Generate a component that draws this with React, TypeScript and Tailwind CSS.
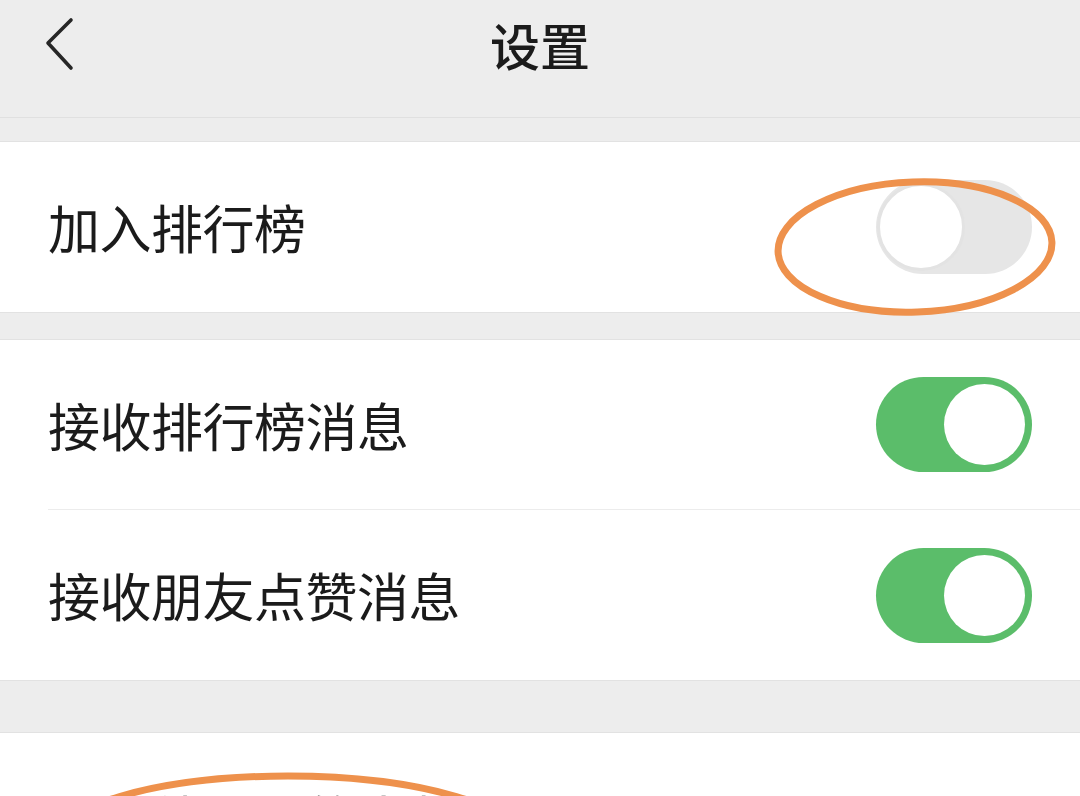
import React from 'react'

const font = { fontFamily: '"Noto Sans CJK SC", "Noto Sans", sans-serif' }

function Toggle({ on }: { on: boolean }) {
  if (on) {
    return (
      <div className="w-[156px] h-[95px] rounded-full bg-[#5bbd6a] flex items-center justify-end pr-[7px]">
        <div className="w-[81px] h-[81px] rounded-full bg-white" />
      </div>
    )
  }
  return (
    <div className="w-[156px] h-[94px] rounded-full bg-[#e6e6e6] flex items-center">
      <div className="w-[88px] h-[88px] ml-[1px] rounded-full bg-white border-[3px] border-[#e3e3e3]" />
    </div>
  )
}

function Row({ label, on, divider }: { label: string; on?: boolean; divider?: boolean }) {
  return (
    <div className="pl-[48px] bg-white">
      <div className={`h-[170px] flex items-center justify-between pr-[48px] ${divider ? 'border-b border-[#ececec]' : ''}`}>
        <span className="text-[52px] leading-none text-[#1b1b1b] tracking-[-0.5px]">{label}</span>
        {on !== undefined && <Toggle on={on} />}
      </div>
    </div>
  )
}

export default function App() {
  return (
    <div className="relative w-[1080px] h-[796px] overflow-hidden bg-[#ededed]" style={font}>
      <header className="h-[118px] flex items-center justify-center relative border-b border-[#e0e0e0]">
        <svg className="absolute left-[40px] top-[14px]" width="40" height="62" viewBox="0 0 40 62">
          <path d="M31 6 L8 29 L31 54" fill="none" stroke="#262626" strokeWidth="3.6" strokeLinecap="round" strokeLinejoin="round" />
        </svg>
        <h1 className="text-[50px] leading-none font-medium text-[#1b1b1b] -mt-[30px]">设置</h1>
      </header>

      <div className="mt-[23px] border-t border-b border-[#e2e2e2]">
        <Row label="加入排行榜" on={false} />
      </div>

      <div className="mt-[26px] border-t border-b border-[#e2e2e2]">
        <Row label="接收排行榜消息" on={true} divider />
        <Row label="接收朋友点赞消息" on={true} />
      </div>

      <div className="mt-[51px] border-t border-[#e2e2e2]">
        <Row label="不让他看我的步数" />
      </div>

      <svg className="absolute left-0 top-0 pointer-events-none" width="1080" height="796" viewBox="0 0 1080 796">
        <ellipse cx="915" cy="247" rx="137" ry="65" fill="none" stroke="#ee914c" strokeWidth="7" transform="rotate(-2 915 247)" />
        <ellipse cx="288" cy="846" rx="238" ry="70" fill="none" stroke="#ee914c" strokeWidth="7" />
      </svg>
    </div>
  )
}
